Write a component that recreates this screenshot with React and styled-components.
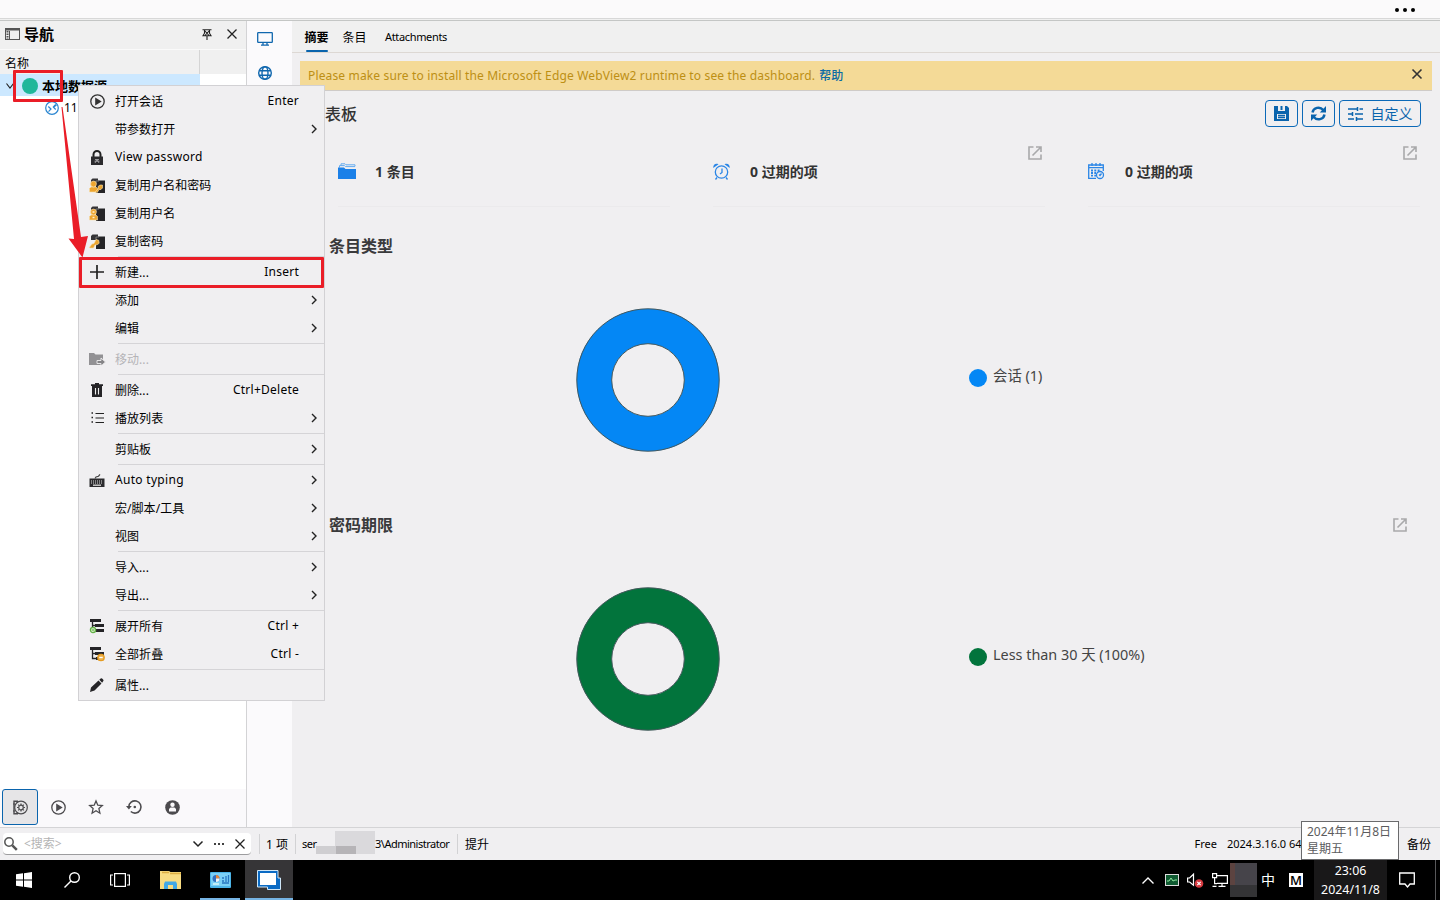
import React from 'react';
import styled, { createGlobalStyle } from 'styled-components';

const Global = createGlobalStyle`
  * { box-sizing: border-box; }
  html, body, #root { height: 900px; margin: 0; overflow: hidden; }
  body {
    font-family: "Noto Sans", "Noto Sans CJK SC", sans-serif;
    font-size: 12px;
    line-height: 16px;
    color: #000;
    background: #f0eff1;
  }
  svg { display: block; flex: none; overflow: visible; }
`;

const Screen = styled.div`
  position: relative;
  display: flex;
  flex-direction: column;
  width: 1440px;
  height: 900px;
  overflow: hidden;
`;

const TopBar = styled.header`
  display: flex;
  justify-content: flex-end;
  align-items: center;
  height: 21px;
  padding: 0 25px 2px 0;
  background: linear-gradient(#fbfafb 18px, #d8d8d8 18px, #d8d8d8 19px, #f0f0f0 19px, #f0f0f0 20px, #c4c6c5 20px);
`;

const Workspace = styled.div`
  display: flex;
  height: 806px;
`;

const Txt = styled.span`
  white-space: nowrap;
  letter-spacing: ${(p) => p.$ls || 0}px;
  font-size: ${(p) => p.$size || 12}px;
  font-weight: ${(p) => (p.$bold ? 700 : 400)};
  color: ${(p) => p.$color || 'inherit'};
`;
const LowTxt = styled(Txt)`
  padding-top: 2px;
`;

/* navigation pane */
const NavPane = styled.aside`
  display: flex;
  flex: none;
  flex-direction: column;
  width: 247px;
  background: #fff;
  border-right: 1px solid #d3d3d5;
`;
const NavTitle = styled.div`
  display: flex;
  align-items: center;
  height: 29px;
  padding: 0 9px 2px 5px;
  background: #f0f0f0;
  border-bottom: 1px solid #fafafa;
`;
const NavName = styled(Txt)`
  flex: 1;
  margin-left: 4px;
`;
const TitleIcons = styled.div`
  display: flex;
  gap: 15px;
`;
const ColumnHead = styled.div`
  display: flex;
  align-items: center;
  height: 24px;
  padding: 3px 0 0 5px;
  background: linear-gradient(90deg, #f0f0f0 199px, #d4d4d4 199px, #d4d4d4 200px, #f0f0f0 200px);
`;
const TreeRow = styled.div`
  display: flex;
  align-items: center;
  width: 200px;
  height: 22px;
  padding: 2px 0 0 ${(p) => p.$indent}px;
  background: ${(p) => (p.$selected ? '#cce8ff' : 'transparent')};
`;
const TreeText = styled(Txt)`
  margin-left: 5px;
`;
const StatusDot = styled.i`
  width: 16px;
  height: 16px;
  margin: 0 -1px 0 8px;
  border-radius: 50%;
  background: #1fb79b;
`;
const NavTabs = styled.div`
  display: flex;
  gap: 2px;
  margin-top: auto;
  height: 38px;
  padding-left: 2px;
  background: #faf9fb;
`;
const NavTab = styled.div`
  display: flex;
  align-items: center;
  justify-content: center;
  width: 36px;
  height: 36px;
  border: 1px solid ${(p) => (p.$active ? '#0a64ad' : 'transparent')};
  border-radius: 3px;
  background: ${(p) => (p.$active ? '#e6e5e7' : 'transparent')};
`;

const IconRail = styled.nav`
  display: flex;
  flex: none;
  flex-direction: column;
  align-items: center;
  gap: 20px;
  width: 45px;
  padding: 11px 9px 0 0;
  background: #fbfafc;
`;

/* content */
const Content = styled.main`
  display: flex;
  flex-direction: column;
  flex: 1;
  min-width: 0;
  background: #f0eff1;
`;
const Tabs = styled.div`
  display: flex;
  height: 32px;
  padding-left: 12px;
  border-bottom: 1px solid #ddd8d4;
  background: #f0f0f0;
`;
const Tab = styled.div`
  display: flex;
  flex-direction: column;
  align-items: center;
  width: ${(p) => p.$w}px;
  margin-right: ${(p) => p.$gap || 0}px;
  padding-top: ${(p) => p.$top || 9}px;
`;
const TabMark = styled.i`
  width: 22px;
  height: 3px;
  margin-top: 4px;
  border-radius: 2px;
  background: #0a64ad;
`;
const Banner = styled.div`
  display: flex;
  align-items: center;
  height: 30px;
  margin: 8px 8px 0;
  padding: 0 10px 0 8px;
  background: #f4da97;
  border-bottom: 1px solid #cfcbc8;
`;
const BannerClose = styled.span`
  margin-bottom: 3px;
`;
const Help = styled(Txt)`
  flex: 1;
  margin-left: 4px;
  font-weight: 500;
  color: #0a6ba5;
`;
const DashHead = styled.div`
  display: flex;
  align-items: center;
  gap: 4px;
  height: 46px;
  padding: 0 19px 1px 17px;
`;
const DashTitle = styled(Txt)`
  flex: 1;
  font-weight: 500;
`;
const Button = styled.div`
  display: flex;
  align-items: center;
  justify-content: center;
  gap: 8px;
  width: ${(p) => p.$w}px;
  height: 27px;
  border: 1px solid #0b69b8;
  border-radius: 4px;
  color: #0a64ad;
`;
const Cards = styled.div`
  display: flex;
  gap: 43px;
  height: 70px;
  padding-left: 46px;
`;
const Card = styled.div`
  display: flex;
  flex: none;
  width: 332px;
  height: 70px;
  padding: 9px 3px 0 0;
  border-bottom: 1px solid #ebeaec;
`;
const CardLabel = styled(Txt)`
  flex: 1;
  margin-top: 16px;
  line-height: 20px;
`;
const CardIcon = styled.span`
  width: 37px;
  margin-top: 17px;
`;
const Section = styled.section`
  height: 279px;
  margin: ${(p) => p.$top || 0}px 33px 0 37px;
  padding-top: 12px;
`;
const SectionHead = styled.div`
  display: flex;
  align-items: center;
  justify-content: space-between;
  height: 24px;
`;
const ChartRow = styled.div`
  display: flex;
  align-items: center;
  margin-top: 50px;
  padding-left: 247px;
`;
const Legend = styled.div`
  display: flex;
  align-items: center;
  gap: 6px;
  margin: 0 0 8px 249px;
`;
const LegendDot = styled.i`
  width: 18px;
  height: 18px;
  margin-top: 3px;
  border-radius: 50%;
  background: ${(p) => p.$color};
`;

/* status bar */
const StatusBar = styled.footer`
  display: flex;
  align-items: center;
  height: 33px;
  padding-left: 3px;
  background: #f0eff1;
  border-top: 1px solid #d4d4d6;
`;
const Search = styled.div`
  display: flex;
  align-items: center;
  width: 248px;
  height: 22px;
  padding: 0 6px 0 1px;
  border-radius: 4px;
  background: #fff;
  border-bottom: 1px solid #9c9c9e;
`;
const Placeholder = styled(Txt)`
  flex: 1;
  margin-left: 6px;
  color: #b4b4b4;
`;
const More = styled.span`
  margin: 0 11px;
`;
const Divider = styled.i`
  width: 1px;
  height: 20px;
  margin-left: ${(p) => p.$gap}px;
  background: #d2d2d4;
`;
const StatusCell = styled.div`
  display: flex;
  align-items: center;
  width: ${(p) => p.$w}px;
  padding-left: ${(p) => p.$l}px;
`;
const Masked = styled.i`
  flex: none;
  width: 59px;
  height: 24px;
  margin-top: -2px;
  background:
    linear-gradient(#b6b4b7, #b6b4b7) 20px 15px / 20px 8px no-repeat,
    linear-gradient(#cfced1, #cfced1) 0 15px / 20px 8px no-repeat,
    linear-gradient(#dad9dc, #dad9dc) 19px 0 / 40px 23px no-repeat;
`;
const UserStart = styled(Txt)`
  width: 14px;
`;
const Version = styled(Txt)`
  width: 168px;
  margin-left: 10px;
`;
const Gear = styled.span`
  margin-right: 9px;
`;
const StatusRight = styled.div`
  display: flex;
  align-items: center;
  margin-left: auto;
  padding-right: 9px;
`;

/* windows taskbar */
const Taskbar = styled.div`
  display: flex;
  height: 40px;
  background: #000;
  color: #fff;
`;
const TaskButton = styled.div`
  display: flex;
  align-items: center;
  justify-content: center;
  width: ${(p) => p.$w || 48}px;
  margin-left: ${(p) => p.$l || 0}px;
  padding-top: ${(p) => (p.$running ? 2 : 0)}px;
  background: ${(p) => (p.$active ? '#363537' : 'transparent')};
  border-bottom: ${(p) => (p.$running ? '2px solid #76b4e4' : '0')};
`;
const Tray = styled.div`
  display: flex;
  align-items: center;
  margin-left: auto;
`;
const TrayItem = styled.span`
  display: flex;
  width: ${(p) => p.$w}px;
  padding-left: ${(p) => p.$l || 0}px;
  font-size: 14px;
`;
const Smudge = styled.i`
  width: 27px;
  height: 34px;
  margin-right: 4px;
  background: linear-gradient(90deg, #5c4340 5px, #46444a 5px);
  border-bottom: 12px solid #343436;
`;
const ImeBadge = styled.b`
  display: flex;
  align-items: center;
  justify-content: center;
  width: 14px;
  height: 14px;
  margin-right: 11px;
  background: #fff;
  color: #000;
  font: 600 13px "Open Sans", sans-serif;
`;
const Clock = styled.div`
  display: flex;
  flex-direction: column;
  align-items: center;
  gap: 3px;
  width: 73px;
  height: 40px;
  padding-top: 3px;
  background: #191819;
`;
const ShowDesktop = styled.i`
  width: 5px;
  height: 40px;
  margin-left: 20px;
  border-left: 1px solid #58585a;
`;

const Tooltip = styled.div`
  position: absolute;
  left: 1301px;
  top: 821px;
  display: flex;
  flex-direction: column;
  width: 98px;
  height: 39px;
  padding: 1px 5px;
  border: 1px solid #6a6a6c;
  background: #fff;
  color: #5c5c5e;
  line-height: 17px;
`;

/* context menu */
const Menu = styled.div`
  position: absolute;
  left: 78px;
  top: 85px;
  width: 247px;
  height: 616px;
  padding: 1px 0;
  border: 1px solid #d2d1d4;
  background: #f0eff1;
`;
const MenuRow = styled.div`
  display: flex;
  align-items: center;
  height: 28px;
  padding-left: 9px;
  color: ${(p) => (p.$disabled ? '#b5b4b7' : '#000')};
`;
const MenuIcon = styled.span`
  display: flex;
  justify-content: center;
  width: 18px;
  margin-right: 9px;
`;
const MenuText = styled(Txt)`
  flex: 1;
  padding-top: ${(p) => (p.$latin ? 0 : 2)}px;
`;
const Shortcut = styled(Txt)`
  margin-right: 25px;
`;
const Caret = styled.span`
  margin-right: 7px;
`;
const MenuLine = styled.div`
  height: 3px;
  padding: 1px 0 1px 39px;
  background: #d5d4d7 content-box;
`;

const Marker = styled.div`
  position: absolute;
  left: ${(p) => p.$x}px;
  top: ${(p) => p.$y}px;
  width: ${(p) => p.$w}px;
  height: ${(p) => p.$h}px;
  border: 3px solid #ea1d27;
  border-radius: 1px;
`;
const Arrow = styled.svg`
  position: absolute;
  left: 58px;
  top: 104px;
`;

/* icons */
const Svg = ({ w = 16, h, s = 1.3, c = '#222', children }) => (
  <svg width={w} height={h || w} viewBox={`0 0 ${w} ${h || w}`} fill="none" stroke={c} strokeWidth={s}>
    {children}
  </svg>
);

const Cross = ({ w = 10, c = '#222', s = 1.3 }) => (
  <Svg w={w} c={c} s={s}><path d={`M.5 .5 ${w - 0.5} ${w - 0.5}M${w - 0.5} .5 .5 ${w - 0.5}`} /></Svg>
);
const Chevron = () => <Svg w={6} h={10} s={1.4}><path d="M1 1l4 4-4 4" /></Svg>;
const Down = ({ w = 10 }) => <Svg w={w} h={6} s={w < 10 ? 1.1 : 1.5}><path d={`M.5 .5 ${w / 2} 5 ${w - 0.5} .5`} /></Svg>;
const Dots = ({ r, gap, c = '#000' }) => (
  <svg width={gap * 2 + r * 2} height={r * 2} fill={c}>
    {[0, 1, 2].map((i) => <circle key={i} cx={r + i * gap} cy={r} r={r} />)}
  </svg>
);
const External = () => (
  <Svg w={14} c="#a9a9ab" s={1.6}>
    <path d="M5.500 1H1v12h12V8.500M8 1h5v5M13 1 4.500 9.500" />
  </Svg>
);
const Play = ({ c = '#333' }) => (
  <Svg w={15} c={c} s={1.3}>
    <circle cx="7.500" cy="7.500" r="6.700" /><path d="M5.200 3.500 11.700 7.500 5.200 11.500z" fill={c} stroke="none" />
  </Svg>
);
const Lock = () => (
  <Svg w={12} h={15} s={2}>
    <path d="M2.500 7V4.500a3.500 3.500 0 0 1 7 0V7" /><path d="M0 6.500h12V15H0z" fill="#2b2a2d" stroke="none" />
    <path d="M4 9.500h4M4 13 6 9.500 8 13M3.500 11.200h5" stroke="#a5a4a7" strokeWidth=".9" />
  </Svg>
);
const CopyBase = ({ kind }) => (
  <Svg w={16} h={15} c="none">
    <path d="M2 2l1.500-1.500H9V6H2z" fill="#353437" /><path d="M7 2.500h9V15H7z" fill="#252427" /><path d="M7 6V3h3" stroke="#8b8a8d" strokeWidth=".8" />
    {kind !== 'pass' && (
      <g fill="#eda52e" stroke="#f7dfae" strokeWidth=".6">
        <path d="M.5 14V10.500L2 9h5l1.500 1.500V14z" /><circle cx="4.500" cy="6" r="2.900" />
      </g>
    )}
    {kind === 'user' && <path d="M3.500 6h2M3.500 11.500h2" stroke="#fff0cf" strokeWidth="1.300" />}
    {kind === 'pass' && <path d="M.3 13.500 3 10l2-.5 2-4 2.800.8.400 3-2.200 1.500-2 .2-1.500 3H1z" fill="#eda52e" stroke="#f7e2b4" strokeWidth=".6" />}
    {kind === 'both' && <path d="M6 14.300l3-3.500V8.500L11 7h2.500v3L12 11.500h-2L8.500 14.300z" fill="#eda52e" stroke="#f7e2b4" strokeWidth=".6" />}
  </Svg>
);
const Plus = () => <Svg w={14} s={1.7}><path d="M7 0v14M0 7h14" /></Svg>;
const MoveFolder = () => (
  <Svg w={16} h={13} c="none">
    <path d="M0 0h5l1.500 1.500H14V12H0z" fill="#929194" />
    <path d="M8 7.500h4V5L16.500 9 12 13V10.500H8z" fill="#858487" stroke="#f0eff1" strokeWidth=".9" />
  </Svg>
);
const Trash = () => (
  <Svg w={12} h={14} c="none">
    <path d="M4 0h4v1.200h4v1.800H0V1.200h4zM1 3h10V14H1z" fill="#252427" />
    <path d="M4.500 5v6.500M7.500 5v6.500" stroke="#eee" strokeWidth="1.100" />
  </Svg>
);
const List = () => (
  <Svg w={13} h={12} s={1.1}>
    <path d="M4.500 1.500H13M4.500 6H13M4.500 10.500H13" /><path d="M.5 1h1.500M.5 5.500h1.500M.5 10h1.500" strokeWidth="1.500" />
  </Svg>
);
const Keyboard = () => (
  <Svg w={16} h={13} c="none">
    <path d="M.5 4.500h15V13H.5z" fill="#2b2a2d" /><path d="M6 4.500 7 3l2.500-.8L11 .3" stroke="#444" strokeWidth="1.200" />
    <path d="M2 7h12M2 9h12" stroke="#ddd" strokeWidth="1" strokeDasharray="1 1" /><path d="M4 11.200h8" stroke="#ddd" />
  </Svg>
);
const Tree = ({ expand }) => (
  <Svg w={15} h={14} c="none">
    <path d="M0 0h11v3H0zM5 5h9v3H5zM6 10h8v3H6z" fill="#252427" />
    <path d="M2.500 3v8.500H6M2.500 6.500H5" stroke="#252427" />
    {expand
      ? <><circle cx="3" cy="11" r="2.600" fill="#d9efcc" stroke="#62b146" strokeWidth="1.300" /><path d="M1.700 11h2.600M3 9.700v2.600" stroke="#62b146" strokeWidth=".7" /></>
      : <><circle cx="11" cy="10.500" r="3.200" fill="#eeb34e" stroke="#e59c22" /><path d="M9.300 10.500h3.400" stroke="#fff" /></>}
  </Svg>
);
const Pencil = () => (
  <Svg w={14} c="none">
    <path d="M0 14l1-4.500 7.500-7 3 3L4.500 12.500zM9.300 1.800 11 .3c.7-.5 3 1.500 2.500 2.500l-1.400 1.900z" fill="#252427" />
  </Svg>
);
const Pin = () => (
  <Svg w={10} h={11} s={1.1}><path d="M.5 .7h9M2.500 .7v3.500L1 6.700h8L7.500 4.200V.7M5 7v4M2.500 1.500 7 6.500M7.500 1.500 3 6.500" /></Svg>
);
const PaneIcon = () => (
  <Svg w={15} h={12} s={1} c="#555">
    <rect x=".5" y=".5" width="14" height="11" /><path d="M0 1.500h15" strokeWidth="2" /><path d="M2.500 3v8" strokeWidth="2" strokeDasharray="1.500 1" /><path d="M4.500 3v8" />
  </Svg>
);
const Monitor = () => (
  <Svg w={16} h={14} c="#1067ae" s={1.3}>
    <rect x=".7" y=".7" width="14.600" height="9.600" rx=".6" /><path d="M6 10.500v2M10 10.500v2M4 13.200h8" />
  </Svg>
);
const Globe = () => (
  <Svg w={14} c="#1067ae" s={1.4}>
    <circle cx="7" cy="7" r="6.300" /><ellipse cx="7" cy="7" rx="3" ry="6.300" /><path d="M1.200 4.800h11.600M1.200 9.200h11.600" />
  </Svg>
);
const Rdp = () => (
  <Svg w={14} c="#2a86d1" s={1.2}>
    <circle cx="7" cy="7" r="6.300" /><path d="M3.300 5.500 6 8l-2.500 2.700M10.700 3.300 8.300 6l2.400 2.500M8 6.500 11.500 4" />
  </Svg>
);
const Vault = () => (
  <Svg w={15} c="#4c4b4e" s={1.2}>
    <path d="M5 1.200H1v12.600h4" strokeWidth="1.400" /><circle cx="8" cy="7.500" r="6.300" /><circle cx="8" cy="7.500" r="2.300" />
    <path d="M8 3.500v1.500M8 10v1.500M4 7.500h1.500M10.500 7.500H12M5.200 4.700l1 1M10.800 4.700l-1 1M5.200 10.300l1-1M10.800 10.300l-1-1M0 4h2M0 11h2" />
  </Svg>
);
const Star = () => <Svg w={14} c="#4c4b4e" s={1.3}><path d="M7 .9 8.800 5.200l4.500.4-3.400 3 1 4.600L7 10.800l-3.900 2.400 1-4.600-3.400-3 4.500-.4z" /></Svg>;
const History = () => (
  <Svg w={16} h={14} c="#4c4b4e" s={1.600}>
    <path d="M2.800 7a6.100 6.100 0 1 1 2 4.500" /><path d="M0 6h5.800L2.900 9.500z" fill="#4c4b4e" stroke="none" /><circle cx="8.800" cy="7" r="1.300" fill="#4c4b4e" stroke="none" />
  </Svg>
);
const Person = () => (
  <Svg w={15} c="none">
    <circle cx="7.500" cy="7.500" r="7.300" fill="#4c4b4e" /><circle cx="7.500" cy="4.700" r="2.200" fill="#faf9fb" /><path d="M4 11.500V9l1.500-1.500h4L11 9v2.500z" fill="#faf9fb" />
  </Svg>
);
const Magnifier = () => (
  <Svg w={14} c="#555" s={1.500}><circle cx="5" cy="5" r="4.200" /><path d="M8.300 8.300 12.800 12.800" strokeWidth="2.500" /></Svg>
);
const Save = () => (
  <Svg w={15} c="none">
    <path d="M0 0h4v5h7V0h2l2 2v13H0z" fill="#0a64ad" /><path d="M6.500 0h2v4h-2z" fill="#0a64ad" />
    <path d="M3 8h9v5H3z" fill="#f0eff1" /><path d="M4 9.500h7M4 11.500h7" stroke="#0a64ad" />
  </Svg>
);
const Refresh = () => (
  <Svg w={15} c="#0a64ad" s={2.400}>
    <path d="M1.500 6.500C2.300 1.500 9 0 12.200 4M13.500 8.500C12.700 13.500 6 15 2.800 11" />
    <path d="M15 0v6.500H8.800zM0 15V8.500h6.200z" fill="#0a64ad" stroke="none" />
  </Svg>
);
const Sliders = () => (
  <Svg w={15} h={14} c="#0a64ad" s={1.500}>
    <path d="M0 2h9M11.500 2H15M9.500 0v4M0 7h4M7 7h8M4.500 5v4M0 12h6M8.500 12H15M8.500 10v4" />
  </Svg>
);
const Folders = () => (
  <Svg w={18} h={16} c="none">
    <path d="M3 2.500V.8h4l1 1h9v1.500M1.500 4.500V2.600h5l1 1H17" stroke="#65abef" strokeWidth="1" />
    <path d="M0 4.500h6l1.500 1.500H18v10H0z" fill="#1b80e8" />
  </Svg>
);
const Alarm = () => (
  <Svg w={17} h={17} c="#2b86e6" s={1.300}>
    <circle cx="8.500" cy="9" r="6.200" /><path d="M9 5.500v4L7 11M4 14.500l-1.500 2M13 14.500l1.500 2" />
    <path d="M.3 5C0 2 2 0 5.500 1.200zM16.700 5C17 2 15 0 11.500 1.200z" fill="#2b86e6" stroke="none" />
  </Svg>
);
const Calendar = () => (
  <Svg w={16} h={16} c="#2b86e6" s={1.300}>
    <path d="M8 15.300H.7V2h14.600v6M.7 4.700h14.600M4 0v3M8 0v3M12 0v3" />
    <path d="M3 7.500h10M3 10h5M3 12.700h5" strokeWidth="1.800" strokeDasharray="2 1.300" /><circle cx="12" cy="12" r="3.500" fill="#f0eff1" /><path d="M13.500 10.500 12 12.500l-1-1" />
  </Svg>
);
const Donut = ({ color }) => (
  <svg width="144" height="144" fill="none">
    <circle cx="72" cy="72" r="53.800" stroke={color} strokeWidth="35" />
    <g stroke="#45585c" strokeWidth="1"><circle cx="72" cy="72" r="71.200" /><circle cx="72" cy="72" r="36.300" /></g>
  </svg>
);
const Windows = () => <Svg w={16} c="none"><path d="M0 2.300 7 1.300v6.300H0zM8 1.200 16 0v7.600H8zM0 8.500h7v6.300L0 13.700zM8 8.500h8V16l-8-1.200z" fill="#fff" /></Svg>;
const TaskSearch = () => <Svg w={16} c="#fff" s={1.400}><circle cx="10.500" cy="5.500" r="4.800" /><path d="M7 9 .5 15.500" /></Svg>;
const TaskView = () => <Svg w={20} h={14} c="#fff" s={1.200}><rect x="4.600" y=".6" width="10.800" height="12.800" /><path d="M3 2H.6v10H3M17 2h2.400v10H17" /></Svg>;
const Explorer = () => (
  <Svg w={22} h={18} c="none">
    <path d="M0 2V0h9l1.500 1H21v17H0z" fill="#f8dc82" /><path d="M2 1.500h7M10 2.500h11" stroke="#dcae43" />
    <path d="M4 18v-5l1-2.500h11l1 2.500v5h-4v-4H8v4z" fill="#42a8e6" />
  </Svg>
);
const PanelApp = () => (
  <Svg w={21} h={16} c="none">
    <rect width="21" height="16" rx="1" fill="#4cb4e8" /><rect x="1" y="1" width="19" height="13" fill="#7bd0f6" />
    <circle cx="6" cy="6.500" r="3.500" fill="#326fbe" /><path d="M6 6.500V3a3.500 3.500 0 0 1 3.500 3.500z" fill="#e7873a" /><path d="M6 6.500h3.500A3.500 3.500 0 0 1 6 10z" fill="#f5f7f8" />
    <path d="M12 6h2M12 9h2M16 4v6M18.500 3v7M12 11h7" stroke="#2776c1" /><path d="M3 12h6" stroke="#eafdf8" />
  </Svg>
);
const RdmApp = () => (
  <Svg w={24} h={20} c="none">
    <path d="M10.500 19.500h13V8H21V.5H.5V17h10z" fill="#0a6ac4" stroke="#cfe6f7" strokeWidth="1" /><rect x="3" y="3" width="16" height="12" fill="#fff" />
  </Svg>
);

const menu = [
  { t: '打开会话', k: 'Enter', icon: <Play /> },
  { t: '带参数打开', sub: true },
  { t: 'View password', icon: <Lock />, latin: true },
  { t: '复制用户名和密码', icon: <CopyBase kind="both" /> },
  { t: '复制用户名', icon: <CopyBase kind="user" /> },
  { t: '复制密码', icon: <CopyBase kind="pass" /> },
  null,
  { t: '新建...', k: 'Insert', icon: <Plus /> },
  { t: '添加', sub: true },
  { t: '编辑', sub: true },
  null,
  { t: '移动...', icon: <MoveFolder />, disabled: true },
  null,
  { t: '删除...', k: 'Ctrl+Delete', icon: <Trash /> },
  { t: '播放列表', icon: <List />, sub: true },
  null,
  { t: '剪贴板', sub: true },
  null,
  { t: 'Auto typing', icon: <Keyboard />, sub: true, latin: true },
  { t: '宏/脚本/工具', sub: true },
  { t: '视图', sub: true },
  null,
  { t: '导入...', sub: true },
  { t: '导出...', sub: true },
  null,
  { t: '展开所有', k: 'Ctrl +', icon: <Tree expand /> },
  { t: '全部折叠', k: 'Ctrl -', icon: <Tree /> },
  null,
  { t: '属性...', icon: <Pencil /> },
];

const cards = [
  { icon: <Folders />, text: '1 条目' },
  { icon: <Alarm />, text: '0 过期的项', link: true },
  { icon: <Calendar />, text: '0 过期的项', link: true },
];

const ContextMenu = () => (
  <Menu>
    {menu.map((m, i) => m ? (
      <MenuRow key={i} $disabled={m.disabled}>
        <MenuIcon>{m.icon}</MenuIcon>
        <MenuText $ls={m.latin ? 0.3 : 0.05} $latin={m.latin}>{m.t}</MenuText>
        {m.k && <Shortcut $ls={0.25}>{m.k}</Shortcut>}
        {m.sub && <Caret><Chevron /></Caret>}
      </MenuRow>
    ) : <MenuLine key={i} />)}
  </Menu>
);

const ChartSection = ({ title, color, legend, link, top }) => (
  <Section $top={top}>
    <SectionHead>
      <Txt $size={16} $bold $color="#3a3a3c">{title}</Txt>
      {link && <External />}
    </SectionHead>
    <ChartRow>
      <Donut color={color} />
      <Legend>
        <LegendDot $color={color} />
        <Txt $size={14.4} $color="#444">{legend}</Txt>
      </Legend>
    </ChartRow>
  </Section>
);

export default function App() {
  return (
    <Screen>
      <Global />
      <TopBar><Dots r={2} gap={8} /></TopBar>
      <Workspace>
        <NavPane>
          <NavTitle>
            <PaneIcon />
            <NavName $size={15} $bold>导航</NavName>
            <TitleIcons><Pin /><Cross /></TitleIcons>
          </NavTitle>
          <ColumnHead><Txt>名称</Txt></ColumnHead>
          <TreeRow $selected $indent={6}>
            <Down w={8} /><StatusDot /><TreeText $size={13} $bold>本地数据源</TreeText>
          </TreeRow>
          <TreeRow $indent={45}><Rdp /><TreeText>111</TreeText></TreeRow>
          <NavTabs>
            <NavTab $active><Vault /></NavTab>
            <NavTab><Play c="#4c4b4e" /></NavTab>
            <NavTab><Star /></NavTab>
            <NavTab><History /></NavTab>
            <NavTab><Person /></NavTab>
          </NavTabs>
        </NavPane>
        <IconRail><Monitor /><Globe /></IconRail>
        <Content>
          <Tabs>
            <Tab $w={25} $gap={13}><Txt $bold>摘要</Txt><TabMark /></Tab>
            <Tab $w={25} $gap={18}><Txt>条目</Txt></Tab>
            <Tab $w={62} $top={8}><Txt $size={11} $ls={-0.35}>Attachments</Txt></Tab>
          </Tabs>
          <Banner>
            <Txt $color="#bd8f14" $ls={0.15}>Please make sure to install the Microsoft Edge WebView2 runtime to see the dashboard.</Txt>
            <Help>帮助</Help>
            <BannerClose><Cross c="#333" s={1.6} /></BannerClose>
          </Banner>
          <DashHead>
            <DashTitle $size={16} $color="#333">仪表板</DashTitle>
            <Button $w={33}><Save /></Button>
            <Button $w={33}><Refresh /></Button>
            <Button $w={82}><Sliders /><Txt $size={14}>自定义</Txt></Button>
          </DashHead>
          <Cards>
            {cards.map((c, i) => (
              <Card key={i}>
                <CardIcon>{c.icon}</CardIcon>
                <CardLabel $size={14} $bold $color="#333">{c.text}</CardLabel>
                {c.link && <External />}
              </Card>
            ))}
          </Cards>
          <ChartSection top={15} title="条目类型" color="#0487f5" legend="会话 (1)" />
          <ChartSection title="密码期限" color="#02743c" legend="Less than 30 天 (100%)" link />
        </Content>
      </Workspace>
      <StatusBar>
        <Search>
          <Magnifier />
          <Placeholder>&lt;搜索&gt;</Placeholder>
          <Down /><More><Dots r={1} gap={4} /></More><Cross />
        </Search>
        <Divider $gap={8} />
        <StatusCell $l={6} $w={35}><LowTxt>1 项</LowTxt></StatusCell>
        <Divider $gap={0} />
        <StatusCell $l={6} $w={161}>
          <UserStart $size={11} $ls={-0.5}>ser</UserStart>
          <Masked />
          <Txt $size={11} $ls={-0.5}>3\Administrator</Txt>
        </StatusCell>
        <Divider $gap={0} />
        <StatusCell $l={7} $w={40}><LowTxt>提升</LowTxt></StatusCell>
        <StatusRight>
          <Txt $size={11}>Free</Txt>
          <Version $size={11}>2024.3.16.0 64</Version>
          <Gear><Svg w={3} h={8} c="#777"><circle cx="-1" cy="4" r="3" /></Svg></Gear>
          <LowTxt>备份</LowTxt>
        </StatusRight>
      </StatusBar>
      <Taskbar>
        <TaskButton><Windows /></TaskButton>
        <TaskButton><TaskSearch /></TaskButton>
        <TaskButton><TaskView /></TaskButton>
        <TaskButton $l={3}><Explorer /></TaskButton>
        <TaskButton $l={5} $w={40} $running><PanelApp /></TaskButton>
        <TaskButton $l={5} $running $active><RdmApp /></TaskButton>
        <Tray>
          <TrayItem $w={23}><Svg w={12} h={7} c="#fff" s={1.4}><path d="M.5 6.500 6 1l5.500 5.500" /></Svg></TrayItem>
          <TrayItem $w={22}>
            <Svg w={14} h={12} c="#ddd" s={1}><rect x=".5" y=".5" width="13" height="11" fill="#0f5a31" /><path d="M2 7h2l2-3 2 3 2-1h2" stroke="#8ee99f" /></Svg>
          </TrayItem>
          <TrayItem $w={25}>
            <Svg w={17} h={15} c="#fff" s={1.2}>
              <path d="M.6 5h2L6.500 1.200v11L2.600 9h-2z" /><circle cx="12" cy="10.500" r="4.300" fill="#d63a40" stroke="none" /><path d="m10.300 8.800 3.400 3.400M13.700 8.800l-3.400 3.400" />
            </Svg>
          </TrayItem>
          <TrayItem $w={18}>
            <Svg w={16} h={14} c="#fff" s={1.2}><path d="M5 2.600h10.400v7.800H5M10 10.500v3M6.500 13.400h7M.6 .6h4v4h-4zM2.600 4.600v6H5M.5 13.400h4" /></Svg>
          </TrayItem>
          <Smudge />
          <TrayItem $w={28}>中</TrayItem>
          <ImeBadge>M</ImeBadge>
          <Clock><Txt $size={12.4}>23:06</Txt><Txt $size={12.4}>2024/11/8</Txt></Clock>
          <TrayItem $w={28} $l={12}>
            <Svg w={16} c="#fff"><path d="M.7 1h14.600v11H11l-2.500 3L6 12H.7z" /></Svg>
          </TrayItem>
          <ShowDesktop />
        </Tray>
      </Taskbar>
      <ContextMenu />
      <Marker $x={13} $y={70} $w={50} $h={32} />
      <Marker $x={79} $y={257} $w={245} $h={31} />
      <Arrow width="32" height="154" fill="#ea1d27"><path d="M3.500 3h1L23 133l7-1-5.500 21.500L10.500 134.500 16 135z" /></Arrow>
      <Tooltip><Txt>2024年11月8日</Txt><Txt>星期五</Txt></Tooltip>
    </Screen>
  );
}
